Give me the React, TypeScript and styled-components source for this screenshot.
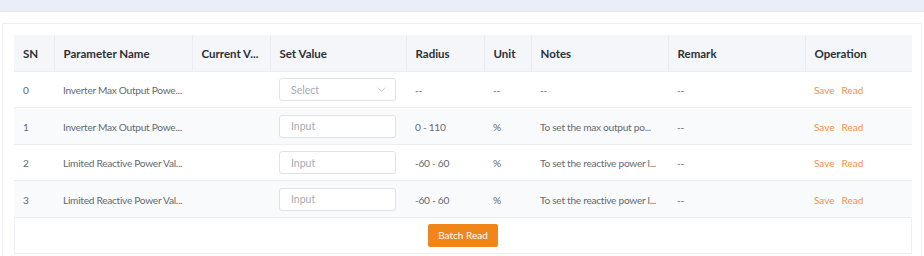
import styled, { createGlobalStyle } from 'styled-components';

const GlobalStyle = createGlobalStyle`
  body {
    margin: 0;
    background: #fff;
    font-family: Lato, "Liberation Sans", Arial, sans-serif;
  }
`;

interface RowData {
    sn: number;
    name: string;
    kind: 'select' | 'input';
    radius: string;
    unit: string;
    notes: string;
    remark: string;
}

const rows: RowData[] = [
    { sn: 0, name: 'Inverter Max Output Powe...', kind: 'select', radius: '--', unit: '--', notes: '--', remark: '--' },
    { sn: 1, name: 'Inverter Max Output Powe...', kind: 'input', radius: '0 - 110', unit: '%', notes: 'To set the max output po...', remark: '--' },
    { sn: 2, name: 'Limited Reactive Power Val...', kind: 'input', radius: '-60 - 60', unit: '%', notes: 'To set the reactive power l...', remark: '--' },
    { sn: 3, name: 'Limited Reactive Power Val...', kind: 'input', radius: '-60 - 60', unit: '%', notes: 'To set the reactive power l...', remark: '--' },
];

const columns = [
    { title: 'SN', width: 40 },
    { title: 'Parameter Name', width: 138 },
    { title: 'Current V...', width: 78 },
    { title: 'Set Value', width: 136 },
    { title: 'Radius', width: 78 },
    { title: 'Unit', width: 47 },
    { title: 'Notes', width: 137 },
    { title: 'Remark', width: 137 },
    { title: 'Operation', width: 107 },
];

const TopBar = styled.div`
    height: 11px;
    background: #eaeef6;
    border-bottom: 1px solid #e2e7f0;
`;

const Panel = styled.div`
    margin: 11px 2px 0 2px;
    border: 1px solid #eef0f3;
    border-bottom: none;
    padding: 11px 9px 4px 11px;
`;

const Table = styled.table`
    width: 898px;
    border-collapse: collapse;
    table-layout: fixed;
`;

const HeadCell = styled.th`
    height: 34.5px;
    padding: 1px 9px 0;
    background: #f5f6fa;
    color: #2b2f36;
    font-size: 11.5px;
    font-weight: 700;
    text-align: left;
    white-space: nowrap;
    overflow: hidden;
    border-bottom: 1px solid #eceef3;
    & + & {
        border-left: 1px solid #eaecf1;
    }
`;

const Row = styled.tr<{ $striped: boolean }>`
    background: ${(p) => (p.$striped ? '#f9fafc' : '#fff')};
`;

const Cell = styled.td`
    height: 33.5px;
    padding: 2px 9px 0;
    color: #666a70;
    font-size: 10.2px;
    letter-spacing: -0.3px;
    white-space: nowrap;
    overflow: hidden;
    border-bottom: 1px solid #eceef3;
`;

const Field = styled.div`
    box-sizing: border-box;
    width: 117px;
    height: 23px;
    margin-top: -1px;
    display: flex;
    align-items: center;
    justify-content: space-between;
    padding: 0 9px 0 11px;
    border: 1px solid #dfe3e9;
    border-radius: 3px;
    background: #fff;
    color: #a8abb1;
    font-size: 10.5px;
    letter-spacing: 0;
`;

const Chevron = styled.svg`
    width: 9px;
    height: 9px;
`;

const Action = styled.span`
    color: #f3904a;
    font-size: 10px;
    letter-spacing: 0;
    margin-right: 7px;
    cursor: pointer;
`;

const Footer = styled.div`
    box-sizing: border-box;
    width: 898px;
    height: 36px;
    display: flex;
    align-items: center;
    justify-content: center;
    border: 1px solid #eef0f3;
    border-top: none;
`;

const BatchButton = styled.button`
    width: 70px;
    height: 23px;
    padding: 0;
    border: none;
    border-radius: 2px;
    background: #f0861a;
    color: #fff;
    font-family: inherit;
    font-size: 10px;
    white-space: nowrap;
    cursor: pointer;
`;

function App() {
    return (
        <>
            <GlobalStyle />
            <TopBar />
            <Panel>
                <Table>
                    <colgroup>
                        {columns.map((c) => (
                            <col key={c.title} style={{ width: c.width }} />
                        ))}
                    </colgroup>
                    <thead>
                        <tr>
                            {columns.map((c) => (
                                <HeadCell key={c.title}>{c.title}</HeadCell>
                            ))}
                        </tr>
                    </thead>
                    <tbody>
                        {rows.map((r, i) => (
                            <Row key={r.sn} $striped={i % 2 === 1}>
                                <Cell>{r.sn}</Cell>
                                <Cell>{r.name}</Cell>
                                <Cell></Cell>
                                <Cell>
                                    {r.kind === 'select' ? (
                                        <Field>
                                            Select
                                            <Chevron viewBox="0 0 10 10">
                                                <path d="M1 3 L5 7 L9 3" fill="none" stroke="#c4c7cc" strokeWidth="1" />
                                            </Chevron>
                                        </Field>
                                    ) : (
                                        <Field>Input</Field>
                                    )}
                                </Cell>
                                <Cell>{r.radius}</Cell>
                                <Cell>{r.unit}</Cell>
                                <Cell>{r.notes}</Cell>
                                <Cell>{r.remark}</Cell>
                                <Cell>
                                    <Action>Save</Action>
                                    <Action>Read</Action>
                                </Cell>
                            </Row>
                        ))}
                    </tbody>
                </Table>
                <Footer>
                    <BatchButton>Batch Read</BatchButton>
                </Footer>
            </Panel>
        </>
    );
}

export default App;
